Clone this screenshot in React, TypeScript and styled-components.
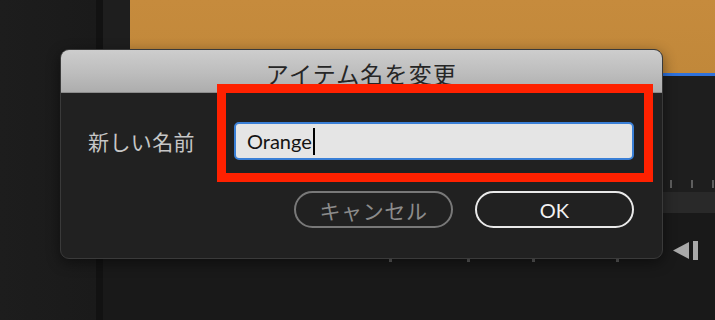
import { FC } from "react";
import styled, { createGlobalStyle } from "styled-components";

const GlobalStyle = createGlobalStyle`
  html, body {
    margin: 0;
    padding: 0;
    background: #1b1b1b;
  }
  * {
    box-sizing: border-box;
  }
`;

const FONT = `"Lato", "Noto Sans CJK JP", sans-serif`;

const rulerTicks = [286, 75, 62, 81];

export default function App() {
  return (
    <>
      <GlobalStyle />
      <Screen>
        <LeftPanel />
        <Divider />
        <Main>
          <Preview />
          <PlayheadLine />
          <TopRuler>
            {Array.from({ length: 30 }).map((_, i) => (
              <Tick key={i} $height={8} />
            ))}
          </TopRuler>
          <Band />
          <BottomArea>
            <TimeRuler>
              {rulerTicks.map((offset, i) => (
                <SmallTick key={i} $offset={offset} />
              ))}
            </TimeRuler>
            <StepBack />
          </BottomArea>
        </Main>
        <RenameDialog />
        <Highlight />
      </Screen>
    </>
  );
}

const StepBack: FC = () => (
  <IconWrap>
    <svg width="26" height="19" viewBox="0 0 26 19">
      <polygon points="0,9.5 16,1 16,18" fill="#a9a9a9" />
      <rect x="20" y="0" width="5" height="19" fill="#a9a9a9" />
    </svg>
  </IconWrap>
);

const RenameDialog: FC = () => {
  return (
    <Dialog>
      <TitleBar>アイテム名を変更</TitleBar>
      <Body>
        <FieldRow>
          <Label>新しい名前</Label>
          <Input>
            Orange
            <Caret />
          </Input>
        </FieldRow>
        <Actions>
          <PillButton $primary={false}>キャンセル</PillButton>
          <PillButton $primary>OK</PillButton>
        </Actions>
      </Body>
    </Dialog>
  );
};

const Screen = styled.div`
  position: relative;
  display: flex;
  width: 715px;
  height: 320px;
  overflow: hidden;
  font-family: ${FONT};
`;

const LeftPanel = styled.div`
  width: 97px;
  background: linear-gradient(90deg, #1d1d1d, #1a1a1a);
`;

const Divider = styled.div`
  width: 7px;
  background: #121212;
`;

const Main = styled.div`
  flex: 1;
  display: flex;
  flex-direction: column;
  background: #1e1e1e;
`;

const Preview = styled.div`
  height: 73px;
  margin-left: 27px;
  background: linear-gradient(180deg, #c68b3d 0%, #c1883a 100%);
`;

const PlayheadLine = styled.div`
  height: 3px;
  background: #2f72dc;
`;

const TopRuler = styled.div`
  display: flex;
  justify-content: flex-end;
  gap: 19px;
  margin-top: 104px;
  padding-right: 1px;
`;

const Tick = styled.div<{ $height: number }>`
  width: 2px;
  height: ${({ $height }) => $height}px;
  background: #5e5e5e;
`;

const Band = styled.div`
  height: 21px;
  margin-top: 4px;
  background: #292929;
`;

const BottomArea = styled.div`
  flex: 1;
  display: flex;
  justify-content: space-between;
  align-items: flex-start;
  background: #191919;
`;

const TimeRuler = styled.div`
  display: flex;
  margin-top: 45px;
`;

const SmallTick = styled.div<{ $offset: number }>`
  width: 3px;
  height: 4px;
  margin-left: ${({ $offset }) => $offset}px;
  background: #5a5a5a;
`;

const IconWrap = styled.div`
  display: flex;
  margin-top: 28px;
  margin-right: 16px;
`;

const Dialog = styled.div`
  position: absolute;
  left: 60px;
  top: 49px;
  width: 603px;
  height: 210px;
  display: flex;
  flex-direction: column;
  border-radius: 9px;
  border: 1px solid #3a3a3a;
  background: #212121;
  box-shadow: 0 4px 14px rgba(0, 0, 0, 0.45);
  overflow: hidden;
`;

const TitleBar = styled.div`
  height: 43px;
  display: flex;
  align-items: center;
  justify-content: center;
  padding-top: 4px;
  background: linear-gradient(180deg, #cdcdcd 0%, #bdbdbd 55%, #adadad 100%);
  border-bottom: 1px solid #8c8c8c;
  color: #262626;
  font-size: 23px;
  letter-spacing: 1.2px;
  font-family: "Noto Sans CJK JP", sans-serif;
`;

const Body = styled.div`
  display: flex;
  flex-direction: column;
  padding: 29px 28px 0 27px;
  gap: 31px;
`;

const FieldRow = styled.div`
  display: flex;
  align-items: center;
  gap: 34px;
`;

const Label = styled.div`
  width: 112px;
  color: #c6c6c6;
  font-size: 21px;
  letter-spacing: 0.4px;
  font-family: "Noto Sans CJK JP", sans-serif;
`;

const Input = styled.div`
  flex: 1;
  height: 38px;
  display: flex;
  align-items: center;
  padding-left: 11px;
  border: 2px solid #3a7fd6;
  border-radius: 5px;
  background: #e5e5e5;
  color: #141414;
  font-size: 20px;
  font-family: ${FONT};
`;

const Caret = styled.span`
  width: 2px;
  height: 27px;
  margin-left: 1px;
  background: #000;
`;

const Actions = styled.div`
  display: flex;
  justify-content: flex-end;
  gap: 22px;
`;

const PillButton = styled.div<{ $primary: boolean }>`
  width: 159px;
  height: 37px;
  display: flex;
  align-items: center;
  justify-content: center;
  border-radius: 19px;
  border: 2px solid ${({ $primary }) => ($primary ? "#e9e9e9" : "#787878")};
  color: ${({ $primary }) => ($primary ? "#f2f2f2" : "#8c8c8c")};
  font-size: ${({ $primary }) => ($primary ? 20 : 21)}px;
  letter-spacing: ${({ $primary }) => ($primary ? 0 : 0.6)}px;
  font-family: ${FONT};
`;

const Highlight = styled.div`
  position: absolute;
  left: 217px;
  top: 84px;
  width: 436px;
  height: 98px;
  border: 9px solid #ff2100;
  pointer-events: none;
`;
